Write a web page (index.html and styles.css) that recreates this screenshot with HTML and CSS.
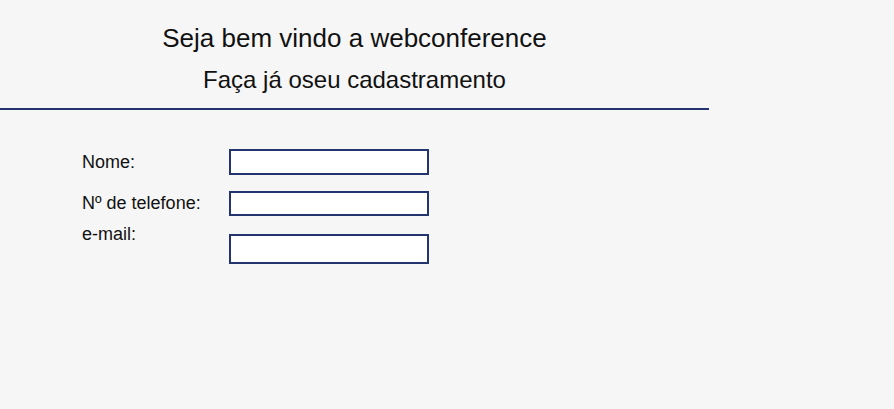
FILE: index.html
```html
<!DOCTYPE html>
<html lang="pt">
<head>
<meta charset="utf-8">
<title>Cadastro</title>
<link rel="stylesheet" href="styles.css">
</head>
<body>
<header class="header">
  <h1 class="title">Seja bem vindo a webconference</h1>
  <h2 class="subtitle">Faça já oseu cadastramento</h2>
</header>
<form class="form">
  <div class="row row-1">
    <label class="label" for="nome">Nome:</label>
    <input class="field field-1" id="nome" type="text">
  </div>
  <div class="row row-2">
    <label class="label" for="tel">Nº de telefone:</label>
    <input class="field field-2" id="tel" type="text">
  </div>
  <div class="row row-3">
    <label class="label" for="email">e-mail:</label>
    <input class="field field-3" id="email" type="text">
  </div>
</form>
</body>
</html>
```
FILE: styles.css
```css
html, body {
  margin: 0;
  padding: 0;
  background: #f6f6f6;
  font-family: "Liberation Sans", Arial, sans-serif;
  color: #111;
}
.header {
  width: 709px;
  border-bottom: 2px solid #24346e;
  text-align: center;
  padding-top: 23px;
  height: 85px;
}
.title {
  margin: 0;
  font-size: 26px;
  font-weight: normal;
  line-height: 30px;
}
.subtitle {
  margin: 0;
  margin-top: 13px;
  font-size: 24px;
  font-weight: normal;
  line-height: 28px;
}
.form {
  padding-left: 82px;
  padding-top: 39px;
  display: flex;
  flex-direction: column;
}
.row {
  display: flex;
  align-items: flex-start;
}
.label {
  width: 147px;
  font-size: 18px;
  line-height: 20px;
}
.field {
  box-sizing: border-box;
  width: 200px;
  margin: 0;
  border: 2px solid #24346e;
  background: #fff;
  padding: 0 4px;
  font-family: inherit;
}
.field-1 { height: 26px; }
.field-2 { height: 25px; }
.field-3 { height: 30px; }
.row-1 .label { margin-top: 3px; }
.row-2 { margin-top: 16px; }
.row-2 .label { margin-top: 2px; }
.row-3 { margin-top: 18px; }
.row-3 .label { margin-top: -10px; }
```
